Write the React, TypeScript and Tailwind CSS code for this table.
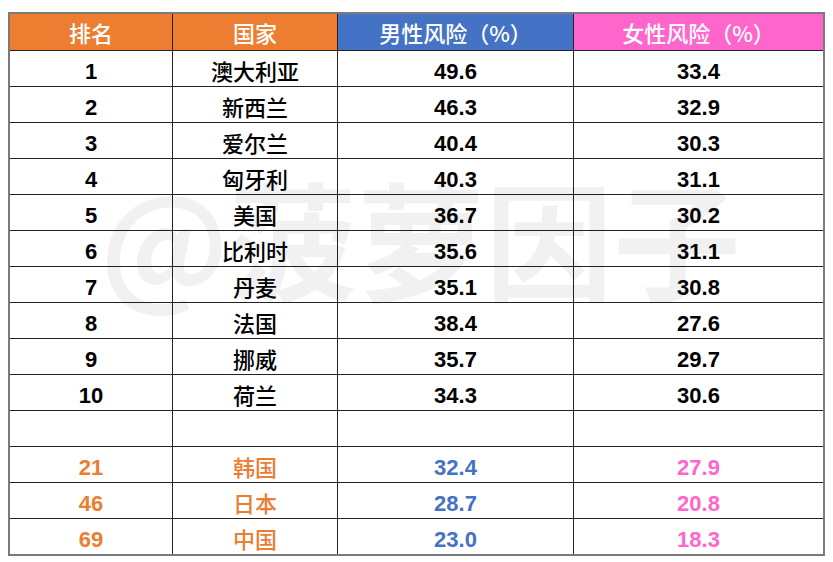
import React from "react";

type Row = { rank: string; country: string; m: string; f: string; hl?: boolean };

const rows: Row[] = [
  { rank: "1", country: "澳大利亚", m: "49.6", f: "33.4" },
  { rank: "2", country: "新西兰", m: "46.3", f: "32.9" },
  { rank: "3", country: "爱尔兰", m: "40.4", f: "30.3" },
  { rank: "4", country: "匈牙利", m: "40.3", f: "31.1" },
  { rank: "5", country: "美国", m: "36.7", f: "30.2" },
  { rank: "6", country: "比利时", m: "35.6", f: "31.1" },
  { rank: "7", country: "丹麦", m: "35.1", f: "30.8" },
  { rank: "8", country: "法国", m: "38.4", f: "27.6" },
  { rank: "9", country: "挪威", m: "35.7", f: "29.7" },
  { rank: "10", country: "荷兰", m: "34.3", f: "30.6" },
  { rank: "", country: "", m: "", f: "" },
  { rank: "21", country: "韩国", m: "32.4", f: "27.9", hl: true },
  { rank: "46", country: "日本", m: "28.7", f: "20.8", hl: true },
  { rank: "69", country: "中国", m: "23.0", f: "18.3", hl: true },
];

const num = "font-['Liberation_Sans',Arial,sans-serif] font-bold text-[22px] leading-none";
const cjk = "font-['Noto_Sans_CJK_SC',sans-serif] font-medium text-[22px] leading-none";

export default function App() {
  return (
    <div className="relative w-[833px] h-[562px] bg-white overflow-hidden">
      <div className="pt-[12px] pl-[8px]">
        <div className="w-[817px] border-2 border-[#7a7a7a]">
          <div className="grid grid-cols-[163px_165px_236px_249px] h-[36px] text-white">
            <div className={`flex items-center justify-center bg-[#ED7D31] border-r border-[#222] ${cjk}`}>排名</div>
            <div className={`flex items-center justify-center bg-[#ED7D31] border-r border-[#222] ${cjk}`}>国家</div>
            <div className={`flex items-center justify-center bg-[#4472C4] border-r border-[#222] ${cjk}`}>男性风险（%）</div>
            <div className={`flex items-center justify-center bg-[#FF66CC] ${cjk}`}>女性风险（%）</div>
          </div>
          {rows.map((r, i) => {
            const orange = r.hl ? "text-[#ED7D31]" : "text-black";
            const blue = r.hl ? "text-[#4472C4]" : "text-black";
            const pink = r.hl ? "text-[#FF66CC]" : "text-black";
            return (
              <div key={i} className="grid grid-cols-[163px_165px_236px_249px] h-[36px] border-t border-[#222]">
                <div className={`flex items-center justify-center border-r border-[#222] pt-[6px] ${num} ${orange}`}>{r.rank}</div>
                <div className={`flex items-center justify-center border-r border-[#222] pt-[3px] ${cjk} ${orange}`}>{r.country}</div>
                <div className={`flex items-center justify-center border-r border-[#222] pt-[6px] ${num} ${blue}`}>{r.m}</div>
                <div className={`flex items-center justify-center pt-[6px] ${num} ${pink}`}>{r.f}</div>
              </div>
            );
          })}
        </div>
      </div>
      <div className="pointer-events-none absolute left-[100px] top-[173px] font-['Noto_Sans_CJK_SC',sans-serif] font-bold text-[128px] leading-none text-black/[0.055] whitespace-nowrap">
        @菠萝因子
      </div>
    </div>
  );
}
